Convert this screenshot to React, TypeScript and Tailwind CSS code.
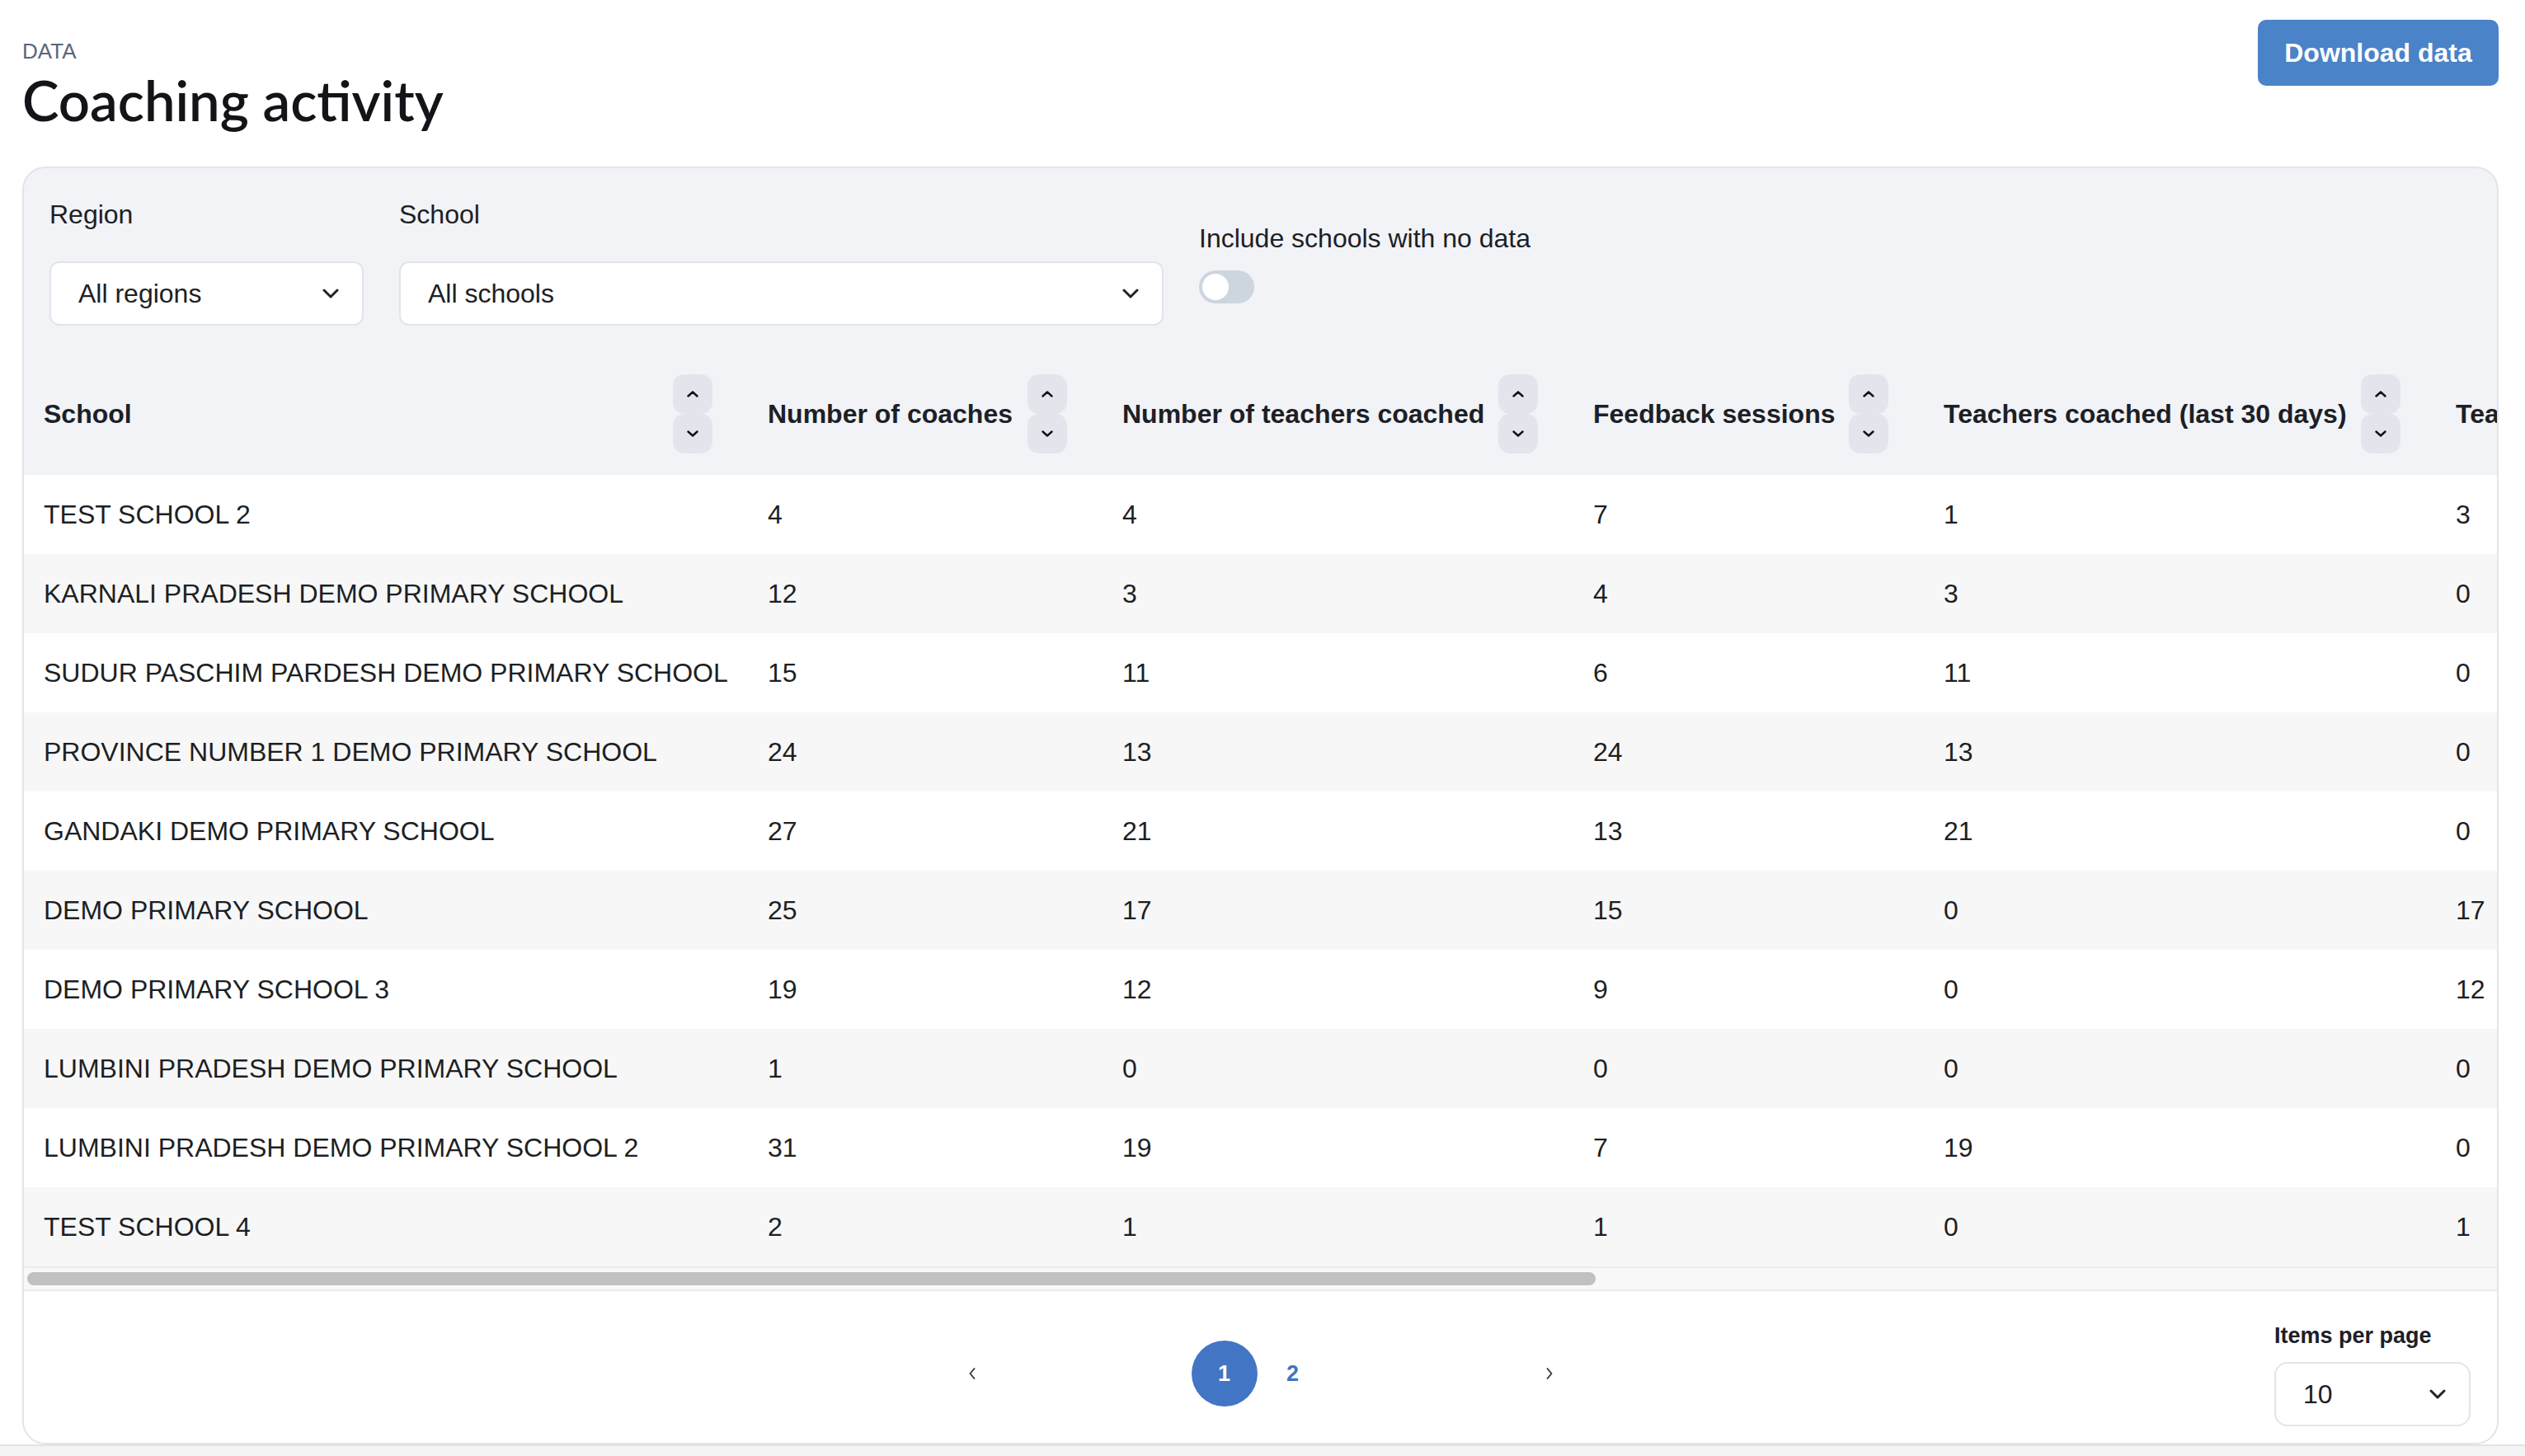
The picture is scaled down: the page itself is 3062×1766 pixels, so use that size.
import React from "react"

const ROWS: [string, number, number, number, number, number][] = [
	["TEST SCHOOL 2", 4, 4, 7, 1, 3],
	["KARNALI PRADESH DEMO PRIMARY SCHOOL", 12, 3, 4, 3, 0],
	["SUDUR PASCHIM PARDESH DEMO PRIMARY SCHOOL", 15, 11, 6, 11, 0],
	["PROVINCE NUMBER 1 DEMO PRIMARY SCHOOL", 24, 13, 24, 13, 0],
	["GANDAKI DEMO PRIMARY SCHOOL", 27, 21, 13, 21, 0],
	["DEMO PRIMARY SCHOOL", 25, 17, 15, 0, 17],
	["DEMO PRIMARY SCHOOL 3", 19, 12, 9, 0, 12],
	["LUMBINI PRADESH DEMO PRIMARY SCHOOL", 1, 0, 0, 0, 0],
	["LUMBINI PRADESH DEMO PRIMARY SCHOOL 2", 31, 19, 7, 19, 0],
	["TEST SCHOOL 4", 2, 1, 1, 0, 1],
]

const COLUMNS = [
	{ label: "School", width: 878 },
	{ label: "Number of coaches", width: 430 },
	{ label: "Number of teachers coached", width: 571 },
	{ label: "Feedback sessions", width: 425 },
	{ label: "Teachers coached (last 30 days)", width: 621 },
	{ label: "Teachers observed", width: 640 },
]

function Chevron({ className = "" }: { className?: string }) {
	return (
		<svg className={className} width="20" height="12" viewBox="0 0 20 12" fill="none" aria-hidden="true">
			<path d="M2 2l8 8 8-8" stroke="#1f2329" strokeWidth="3" strokeLinecap="round" strokeLinejoin="round" />
		</svg>
	)
}

function SortButtons() {
	return (
		<div className="flex flex-col shrink-0">
			<button className="w-[48px] h-[48px] rounded-[14px] bg-[#e2e6ec] flex items-center justify-center">
				<svg width="14" height="8" viewBox="0 0 14 8" fill="none" aria-hidden="true">
					<path d="M1.5 6.5l5.5-5 5.5 5" stroke="#111" strokeWidth="2.4" strokeLinecap="round" strokeLinejoin="round" />
				</svg>
			</button>
			<button className="w-[48px] h-[48px] rounded-[14px] bg-[#e2e6ec] flex items-center justify-center">
				<svg width="14" height="8" viewBox="0 0 14 8" fill="none" aria-hidden="true">
					<path d="M1.5 1.5l5.5 5 5.5-5" stroke="#111" strokeWidth="2.4" strokeLinecap="round" strokeLinejoin="round" />
				</svg>
			</button>
		</div>
	)
}

function Select({ value, width }: { value: string; width: string }) {
	return (
		<div
			className={`${width} h-[78px] rounded-[12px] border-2 border-[#e1e5eb] bg-white flex items-center justify-between pl-[33px] pr-[28px] text-[32px] text-[#1d2025]`}>
			<span>{value}</span>
			<Chevron />
		</div>
	)
}

export default function App() {
	return (
		<div className="w-[3062px] h-[1766px] overflow-hidden bg-white flex flex-col font-['Liberation_Sans',Arial,sans-serif] text-[#1d2025]">
			{/* Page header */}
			<header className="h-[202px] shrink-0 flex justify-between pl-[27px] pr-[32px] pt-[24px]">
				<div className="pt-[23px]">
					<div className="text-[26px] leading-[30px] text-[#5b6579]">DATA</div>
					<h1 className="mt-[9px] text-[67px] leading-[70px] font-semibold text-[#121417] font-['Lato',sans-serif]">
						Coaching activity
					</h1>
				</div>
				<button className="w-[292px] h-[80px] rounded-[10px] bg-[#4a83c8] text-white text-[32px] font-bold">
					Download data
				</button>
			</header>

			{/* Card */}
			<div className="flex-1 ml-[27px] mr-[32px] flex flex-col rounded-[28px] border-2 border-[#e1e4e9] bg-[#f1f3f6] overflow-hidden">
				{/* Filters */}
				<div className="h-[224px] shrink-0 flex gap-[43px] pl-[31px] pt-[37px]">
					<div>
						<div className="text-[32px] leading-[38px] mb-[38px]">Region</div>
						<Select value="All regions" width="w-[381px]" />
					</div>
					<div>
						<div className="text-[32px] leading-[38px] mb-[38px]">School</div>
						<Select value="All schools" width="w-[927px]" />
					</div>
					<div className="pt-[29px]">
						<div className="text-[32px] leading-[38px] mb-[20px]">Include schools with no data</div>
						<div className="w-[67px] h-[40px] rounded-full bg-[#cdd5df] flex items-center px-[4px]">
							<div className="w-[32px] h-[32px] rounded-full bg-white" />
						</div>
					</div>
				</div>

				{/* Table */}
				<div className="overflow-hidden shrink-0">
					<table className="table-fixed border-collapse w-[3565px]">
						<colgroup>
							{COLUMNS.map((c) => (
								<col key={c.label} style={{ width: c.width }} />
							))}
						</colgroup>
						<thead>
							<tr className="h-[148px]">
								{COLUMNS.map((c) => (
									<th key={c.label} className="p-0 text-left align-middle">
										<div className="flex items-center justify-between pl-[24px] pr-[43px] gap-[16px]">
											<span className="text-[32px] font-bold text-[#1c2026] whitespace-nowrap">{c.label}</span>
											<SortButtons />
										</div>
									</th>
								))}
							</tr>
						</thead>
						<tbody>
							{ROWS.map((row, i) => (
								<tr key={row[0]} className={`h-[96px] ${i % 2 === 0 ? "bg-white" : "bg-[#f7f7f7]"}`}>
									{row.map((cell, j) => (
										<td key={j} className="pl-[24px] text-[32px] whitespace-nowrap text-[#1d1f23]">
											{cell}
										</td>
									))}
								</tr>
							))}
						</tbody>
					</table>
				</div>

				{/* Horizontal scrollbar */}
				<div className="h-[30px] shrink-0 bg-[#f8f8f8] border-y-2 border-[#ebebeb] flex items-center pl-[4px]">
					<div className="w-[1902px] h-[16px] rounded-full bg-[#c1c1c1]" />
				</div>

				{/* Pagination */}
				<div className="flex-1 bg-white grid grid-cols-[1fr_auto_1fr] items-center">
					<div />
					<nav className="flex items-center pt-[16px]">
						<button className="w-[80px] h-[80px] flex items-center justify-center">
							<svg width="8" height="14" viewBox="0 0 8 14" fill="none" aria-hidden="true">
								<path d="M6.5 1L1.5 7l5 6" stroke="#333" strokeWidth="1.8" strokeLinecap="round" strokeLinejoin="round" />
							</svg>
						</button>
						<div className="ml-[226px] flex items-center gap-[3px]">
							<button className="w-[80px] h-[80px] rounded-full bg-[#4375c5] text-white text-[27px] font-bold">1</button>
							<button className="w-[80px] h-[80px] text-[#3f74c4] text-[27px] font-bold">2</button>
						</div>
						<button className="ml-[231px] w-[80px] h-[80px] flex items-center justify-center">
							<svg width="8" height="14" viewBox="0 0 8 14" fill="none" aria-hidden="true">
								<path d="M1.5 1l5 6-5 6" stroke="#333" strokeWidth="1.8" strokeLinecap="round" strokeLinejoin="round" />
							</svg>
						</button>
					</nav>
					<div className="flex justify-end pr-[32px] pt-[18px]">
						<div>
							<div className="text-[27px] font-bold text-[#1c2026] leading-[32px] mb-[16px]">Items per page</div>
							<div className="w-[238px] h-[78px] rounded-[16px] border-2 border-[#e1e5eb] flex items-center justify-between pl-[33px] pr-[28px] text-[32px]">
								<span>10</span>
								<Chevron />
							</div>
						</div>
					</div>
				</div>
			</div>

			{/* Bottom strip */}
			<div className="h-[14px] shrink-0 bg-[#f4f4f4] border-t-2 border-[#e3e3e3]" />
		</div>
	)
}
